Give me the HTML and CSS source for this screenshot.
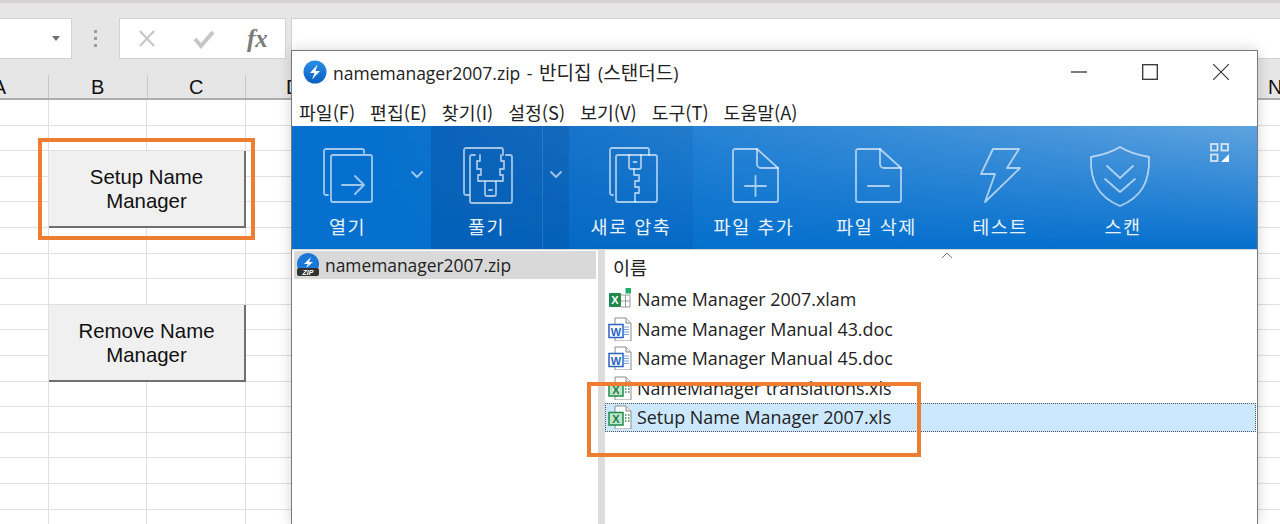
FILE: index.html
```html
<!DOCTYPE html>
<html lang="ko">
<head>
<meta charset="utf-8">
<title>namemanager2007.zip - 반디집</title>
<link rel="stylesheet" href="styles.css">
</head>
<body>
<svg class="sprite" width="0" height="0">
  <defs>
    <symbol id="doc-word" viewBox="0 0 24 24">
      <path d="M7 1h11l5 5v18H7z" fill="#fff" stroke="#8c8c8c"/>
      <path d="M18 1v5h5" fill="#eee" stroke="#8c8c8c"/>
      <path d="M16 10h5M16 12.500h5M16 15h5M16 17.500h5" stroke="#7da7dc"/>
      <rect x="1" y="7.500" width="14" height="13" fill="#fff" stroke="#2a62c0" stroke-width="1.500"/>
      <text x="8" y="18.500" class="ico-w">W</text>
    </symbol>
    <symbol id="doc-xls" viewBox="0 0 24 24">
      <path d="M7 1h11l5 5v18H7z" fill="#fff" stroke="#8c8c8c"/>
      <path d="M18 1v5h5" fill="#eee" stroke="#8c8c8c"/>
      <path d="M17 10h1.500M20 10h1.500M17 13h1.500M20 13h1.500M17 16h1.500M20 16h1.500" stroke="#2f8f55" stroke-width="1.500"/>
      <rect x="1" y="7.500" width="14" height="12.500" fill="#bfe6cc" stroke="#1f8a4c" stroke-width="1.500"/>
      <text x="8" y="18" class="ico-x">X</text>
    </symbol>
  </defs>
</svg>

<main class="sheet">
  <div class="top-strip"></div>
  <div class="formula-row">
    <div class="name-box"><span class="caret"></span></div>
    <div class="grip"><i></i><i></i><i></i></div>
    <div class="fx-box">
      <svg class="fx-ico" width="26" height="24" viewBox="0 0 26 24"><path d="M5 4l14 15M19 4L5 19" fill="none" stroke="#c6c6c6" stroke-width="2"/></svg>
      <svg class="fx-ico" width="24" height="24" viewBox="0 0 24 24"><path d="M3 12l6 7L21 5" fill="none" stroke="#c6c6c6" stroke-width="4"/></svg>
      <span class="fx-text">fx</span>
    </div>
    <div class="formula-input"></div>
  </div>
  <div class="col-heads">
    <div class="col-head col-a"><span>A</span></div>
    <div class="col-head col-w"><span>B</span></div>
    <div class="col-head col-w"><span>C</span></div>
    <div class="col-head col-d"><span>D</span></div>
    <div class="col-head col-n"><span>N</span></div>
  </div>
  <div class="grid">
    <button class="xl-btn btn-setup">Setup Name<br>Manager</button>
    <button class="xl-btn btn-remove">Remove Name<br>Manager</button>
  </div>
</main>

<section class="window">
  <header class="titlebar">
    <svg width="24" height="24" viewBox="0 0 24 24"><defs><linearGradient id="lg" x1="0" y1="0" x2="0" y2="1"><stop offset="0" stop-color="#2a8fe6"/><stop offset="1" stop-color="#0a5fc0"/></linearGradient></defs><circle cx="12" cy="12" r="11.500" fill="url(#lg)"/><path d="M14.500 4.500L7 13h4.500L9 19.500 17 11h-4.500z" fill="#fff"/></svg>
    <span class="title-text">namemanager2007.zip - <span class="ko">반디집</span> (<span class="ko">스탠더드</span>)</span>
    <div class="win-controls">
      <svg width="16" height="16" viewBox="0 0 16 16"><path d="M0 8h16" stroke="#333" stroke-width="1.300"/></svg>
      <svg width="16" height="16" viewBox="0 0 16 16"><rect x="0.700" y="0.700" width="14.600" height="14.600" fill="none" stroke="#333" stroke-width="1.300"/></svg>
      <svg width="16" height="16" viewBox="0 0 16 16"><path d="M0 0l16 16M16 0L0 16" stroke="#333" stroke-width="1.100"/></svg>
    </div>
  </header>
  <nav class="menubar">
    <span>파일(F)</span><span>편집(E)</span><span>찾기(I)</span><span>설정(S)</span><span>보기(V)</span><span>도구(T)</span><span>도움말(A)</span>
  </nav>
  <div class="toolbar">
    <div class="tool t-open">
      <svg class="tool-ico" width="56" height="62" viewBox="0 0 56 62"><g class="ln"><path d="M10 52H8a2 2 0 0 1-2-2V8a2 2 0 0 1 2-2h36a2 2 0 0 1 2 2v2"/><rect x="13" y="12" width="41" height="47" rx="2"/><path d="M24 42h21M37 33l9 9-9 9"/></g></svg>
      <span>열기</span>
    </div>
    <div class="tool-arrow a-open"><svg width="14" height="9" viewBox="0 0 14 9"><path class="ln" d="M2 2l5 5 5-5"/></svg></div>
    <div class="tool t-extract dark">
      <svg class="tool-ico" width="56" height="62" viewBox="0 0 56 62"><g class="ln"><path d="M10 52H7a2 2 0 0 1-2-2V7a2 2 0 0 1 2-2h35a2 2 0 0 1 2 2v5"/><path d="M16 12h-3a2 2 0 0 0-2 2v44a2 2 0 0 0 2 2h38a2 2 0 0 0 2-2V14a2 2 0 0 0-2-2h-4"/><path d="M21 12v6h-3v8h4v6h-3v6h7M42 12v6h3v8h-4v6h3v6h-7"/><rect x="26" y="38" width="11" height="15" rx="2"/><path d="M30 47h3"/></g></svg>
      <span>풀기</span>
    </div>
    <div class="tool-arrow a-extract dark"><svg width="14" height="9" viewBox="0 0 14 9"><path class="ln" d="M2 2l5 5 5-5"/></svg></div>
    <div class="tool t-new mid">
      <svg class="tool-ico" width="56" height="62" viewBox="0 0 56 62"><g class="ln"><path d="M10 52H9a2 2 0 0 1-2-2V7a2 2 0 0 1 2-2h35a2 2 0 0 1 2 2v5"/><rect x="13" y="12" width="41" height="47" rx="2"/><path d="M26 12v12a2 2 0 0 0 2 2h8a2 2 0 0 0 2-2V12"/><path d="M30.500 19h3"/><path d="M31 26v6h5v6h-4v6h4v6h-4v9"/></g></svg>
      <span>새로 압축</span>
    </div>
    <div class="tool t-add">
      <svg class="tool-ico" width="56" height="62" viewBox="0 0 56 62"><g class="ln"><path d="M31 6H9a2 2 0 0 0-2 2v49a2 2 0 0 0 2 2h41a2 2 0 0 0 2-2V25z"/><path d="M31 6v15a4 4 0 0 0 4 4h17"/><path d="M19 43h21M29.500 33v20"/></g></svg>
      <span>파일 추가</span>
    </div>
    <div class="tool t-del">
      <svg class="tool-ico" width="56" height="62" viewBox="0 0 56 62"><g class="ln"><path d="M31 6H9a2 2 0 0 0-2 2v49a2 2 0 0 0 2 2h41a2 2 0 0 0 2-2V25z"/><path d="M31 6v15a4 4 0 0 0 4 4h17"/><path d="M19 43h21"/></g></svg>
      <span>파일 삭제</span>
    </div>
    <div class="tool t-test">
      <svg class="tool-ico" width="56" height="62" viewBox="0 0 56 62"><path class="ln" d="M21 6h26L35 25h13L13 59l10-28H9z"/></svg>
      <span>테스트</span>
    </div>
    <div class="tool t-scan">
      <svg class="tool-ico" width="64" height="64" viewBox="0 0 64 64"><g class="ln"><path d="M32 4c8 5 18 8 29 10 1 24-7 40-29 49C10 54 2 38 3 14 14 12 24 9 32 4z"/><path d="M19 23l13 12 13-12M17 36l15 13 15-13"/></g></svg>
      <span>스캔</span>
    </div>
    <svg class="view-toggle" width="20" height="20" viewBox="0 0 20 20"><g fill="none" stroke="#dbe9f7" stroke-width="1.700"><rect x="1" y="1" width="6.500" height="6.500"/><rect x="11.500" y="1" width="6.500" height="6.500"/><rect x="1" y="11.500" width="6.500" height="6.500"/></g><path d="M19 11v8h-8z" fill="#fff"/></svg>
  </div>
  <div class="panes">
    <aside class="tree">
      <div class="tree-item">
        <svg width="24" height="24" viewBox="0 0 24 24"><circle cx="12" cy="11" r="11" fill="#1a78d6"/><path d="M15 4L8 11h4l-2 4 7-6h-4z" fill="#fff"/><rect x="1" y="15" width="22" height="8" rx="2" fill="#333"/><text x="12" y="22" class="ico-zip">ZIP</text></svg>
        <span>namemanager2007.zip</span>
      </div>
    </aside>
    <div class="splitter"></div>
    <div class="files">
      <div class="files-head"><span>이름</span><svg class="sort" width="12" height="7" viewBox="0 0 12 7"><path d="M1 6l5-5 5 5" fill="none" stroke="#777"/></svg></div>
      <div class="file">
        <svg width="24" height="24" viewBox="0 0 24 24"><rect x="1" y="6" width="12" height="14" rx="1" fill="#1f8a4c"/><text x="7" y="17" class="ico-letter">X</text><path d="M13 8h9v12h-9M17.500 8v12M13 14h9" fill="none" stroke="#999"/><rect x="17.500" y="1" width="5.500" height="5.500" fill="#1fae6a"/></svg>
        <span>Name Manager 2007.xlam</span>
      </div>
      <div class="file"><svg width="24" height="24"><use href="#doc-word"/></svg><span>Name Manager Manual 43.doc</span></div>
      <div class="file"><svg width="24" height="24"><use href="#doc-word"/></svg><span>Name Manager Manual 45.doc</span></div>
      <div class="file"><svg width="24" height="24"><use href="#doc-xls"/></svg><span>NameManager translations.xls</span></div>
      <div class="file selected"><svg width="24" height="24"><use href="#doc-xls"/></svg><span>Setup Name Manager 2007.xls</span></div>
    </div>
  </div>
</section>

<div class="mark mark-btn"></div>
<div class="mark mark-file"></div>
</body>
</html>
```
FILE: styles.css
```css
* { box-sizing: border-box; }
html, body { margin: 0; height: 524px; overflow: hidden; background: #fff; }
body { position: relative; font-family: "Liberation Sans", Arial, sans-serif; }
.sprite { position: absolute; }

/* spreadsheet behind */
.sheet { display: flex; flex-direction: column; height: 524px; background: #e6e6e6; }
.top-strip { height: 3px; background: #d6d4d2; flex: none; }
.formula-row { display: flex; height: 72px; padding-top: 15px; flex: none; align-items: flex-start; }
.name-box { width: 72px; height: 41px; background: #fff; border: 1px solid #d2d2d2; border-left: 0; position: relative; }
.caret { position: absolute; right: 11px; top: 17px; border: 4px solid transparent; border-top: 5px solid #6e6e6e; border-bottom: 0; }
.grip { width: 47px; height: 41px; display: flex; flex-direction: column; align-items: center; justify-content: center; gap: 4px; }
.grip i { width: 3px; height: 3px; background: #9c9c9c; }
.fx-box { width: 167px; height: 41px; background: #fff; border: 1px solid #d2d2d2; display: flex; align-items: center; padding-left: 15px; gap: 31px; }
.fx-ico { flex: none; }
.fx-box .fx-text { font: italic bold 25px "Liberation Serif", serif; color: #7a7a7a; }
.formula-input { flex: 1; height: 41px; margin-left: 5px; background: #fff; border: 1px solid #d2d2d2; border-right: 0; }

.col-heads { display: flex; height: 25px; flex: none; border-bottom: 2px solid #adadad; font-size: 20px; color: #111; }
.col-head { border-right: 1px solid #c8c8c8; display: flex; align-items: center; justify-content: center; overflow: hidden; padding-top: 1px; }
.col-a { width: 98px; margin-left: -49px; }
.col-w { width: 98.500px; }
.col-d { flex: 1; justify-content: flex-start; padding-left: 40px; border-right: 0; }
.col-n { width: 12px; border-right: 0; justify-content: flex-start; }

.grid {
  flex: 1; position: relative; background-color: #fff;
  background-image:
    repeating-linear-gradient(to bottom, transparent 0, transparent 24.600px, #e0e0e0 24.600px, #e0e0e0 25.600px),
    linear-gradient(to right, transparent 48px, #e0e0e0 48px, #e0e0e0 49px, transparent 49px, transparent 146px, #e0e0e0 146px, #e0e0e0 147px, transparent 147px, transparent 245px, #e0e0e0 245px, #e0e0e0 246px, transparent 246px);
}
.xl-btn {
  position: absolute; left: 49px; width: 197px; height: 77px; padding: 0;
  background: #f0f0f0; border: 0; border-right: 2px solid #6f6f6f; border-bottom: 2px solid #6f6f6f;
  font: 20.400px/24px "Liberation Sans", Arial, sans-serif; color: #111;
}
.btn-setup { top: 51px; }
.btn-remove { top: 205px; }

/* archive window */
.window {
  position: absolute; left: 291px; top: 50px; width: 967px; height: 474px;
  background: #fff; border: 1px solid #7a7a7a; border-bottom: 0;
  display: flex; flex-direction: column;
  box-shadow: 0 0 12px rgba(0,0,0,.18);
  font-family: "Noto Sans", "Noto Sans CJK KR", sans-serif; color: #222;
}
.titlebar { height: 41px; flex: none; display: flex; align-items: center; padding-left: 11px; gap: 6px; }
.title-text { font-size: 17.500px; word-spacing: 2px; font-family: "Open Sans", "Noto Sans CJK KR", sans-serif; }
.title-text .ko { font-size: 19px; font-family: "Noto Sans CJK KR", sans-serif; }
.win-controls { margin-left: auto; display: flex; gap: 55px; padding-right: 28px; }
.menubar { height: 34px; flex: none; display: flex; gap: 15px; padding: 5px 0 0 7px; align-items: center; font-size: 18.300px; font-family: "Noto Sans CJK KR", sans-serif; }

.toolbar {
  position: relative; height: 123px; flex: none; display: flex;
  background: #0670ce;
  color: #e8f2fb; font-size: 18.500px; letter-spacing: 1.500px;
  font-family: "Noto Sans CJK KR", sans-serif;
}
.toolbar::before {
  content: ""; position: absolute; inset: 0; pointer-events: none;
  background: linear-gradient(to right, rgba(255,255,255,0) 8%, rgba(255,255,255,.36) 100%);
  -webkit-mask-image: linear-gradient(to bottom, #000, transparent);
  mask-image: linear-gradient(to bottom, #000, transparent);
}
.tool { position: relative; display: flex; flex-direction: column; align-items: center; padding-top: 17px; white-space: nowrap; }
.tool > span { margin-top: 9px; line-height: 24px; }
.tool-ico { flex: none; }
.t-open .tool-ico { margin-right: 3px; }
.t-scan .tool-ico { margin-right: 6px; margin-bottom: -2px; }
.ln { fill: none; stroke: rgba(255,255,255,.62); stroke-width: 1.800; stroke-linejoin: round; stroke-linecap: round; }
.tool-arrow { position: relative; padding-top: 44px; display: flex; justify-content: center; }
.dark { background: rgba(0,40,110,.22); }
.mid { background: rgba(0,40,110,.08); }
.t-open { width: 111px; }
.a-open { width: 28px; }
.t-extract { width: 111px; }
.a-extract { width: 27px; border-left: 1px solid rgba(255,255,255,.12); }
.t-new { width: 124px; }
.t-add { width: 122px; }
.t-del { width: 123px; }
.t-test { width: 124px; }
.t-scan { width: 122px; }
.view-toggle { position: absolute; right: 27px; top: 17px; }

.panes { flex: 1; display: flex; min-height: 0; border-top: 1px solid #d5d5d5; }
.tree { width: 306px; flex: none; padding: 1px 2px 0 2px; }
.tree-item { height: 28px; background: #d9d9d9; display: flex; align-items: center; gap: 5px; padding-left: 2px; font-size: 17.400px; font-family: "Open Sans", sans-serif; }
.splitter { width: 7px; flex: none; background: #dcdcdc; }
.files { flex: 1; font-size: 17.900px; font-family: "Open Sans", "Noto Sans CJK KR", sans-serif; }
.files-head { height: 34px; position: relative; display: flex; align-items: center; padding-left: 8px; font-size: 18.500px; }
.sort { position: absolute; left: 336px; top: 2px; }
.file { height: 29.700px; display: flex; align-items: center; gap: 5px; padding-left: 3px; white-space: nowrap; }
.selected { height: 29px; margin-right: 1px; background: #cce8ff; border: 1px dotted #555; padding-left: 2px; }
.ico-letter { font: bold 11px "Liberation Sans", sans-serif; fill: #fff; text-anchor: middle; }
.ico-w { font: bold 11px "Liberation Sans", sans-serif; fill: #2a62c0; text-anchor: middle; }
.ico-x { font: bold 11px "Liberation Sans", sans-serif; fill: #1f7a44; text-anchor: middle; }
.ico-zip { font: italic bold 7px "Liberation Sans", sans-serif; fill: #fff; text-anchor: middle; }

/* annotation frames */
.mark { position: absolute; border: 4px solid #ed7d31; }
.mark-btn { left: 38px; top: 138px; width: 217px; height: 102px; }
.mark-file { left: 587px; top: 382px; width: 334px; height: 75px; }
```
